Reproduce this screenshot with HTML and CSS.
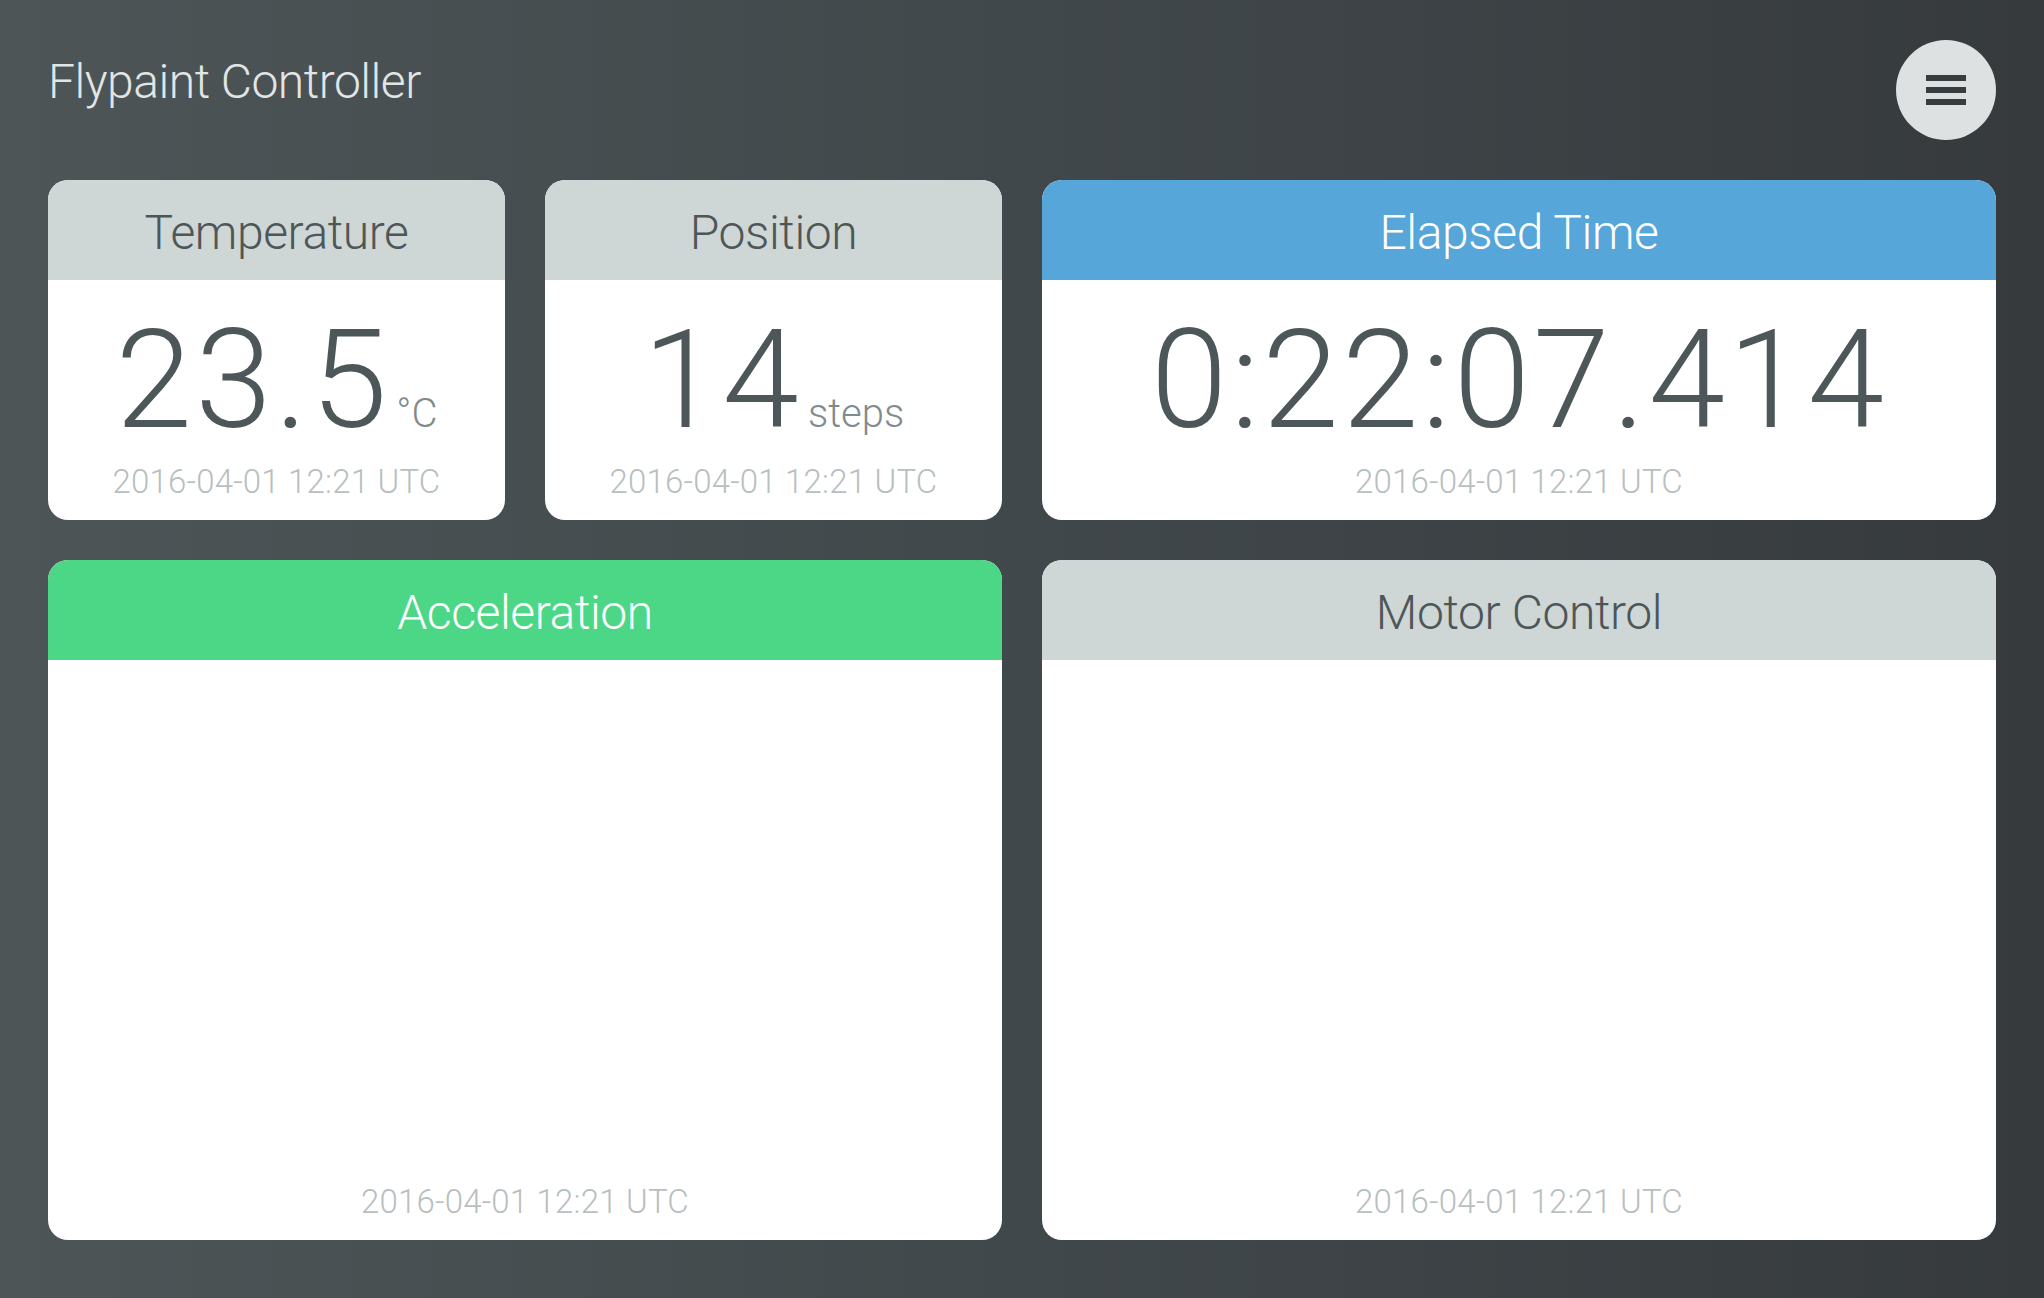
FILE: index.html
```html
<!DOCTYPE html>
<html lang="en">
<head>
<meta charset="utf-8">
<title>Flypaint Controller</title>
<link rel="stylesheet" href="styles.css">
</head>
<body>
<div class="page">
  <header class="topbar">
    <h1 class="title">Flypaint Controller</h1>
    <button class="menu-btn" aria-label="Menu">
      <span class="bar"></span><span class="bar"></span><span class="bar"></span>
    </button>
  </header>
  <main class="grid">
    <section class="card">
      <div class="card-head">Temperature</div>
      <div class="card-body">
        <div class="reading"><span class="value">23.5</span><span class="unit">°C</span></div>
        <div class="stamp">2016-04-01 12:21 UTC</div>
      </div>
    </section>
    <section class="card">
      <div class="card-head">Position</div>
      <div class="card-body">
        <div class="reading"><span class="value">14</span><span class="unit">steps</span></div>
        <div class="stamp">2016-04-01 12:21 UTC</div>
      </div>
    </section>
    <section class="card card-wide">
      <div class="card-head head-blue">Elapsed Time</div>
      <div class="card-body">
        <div class="reading"><span class="value">0:22:07.414</span></div>
        <div class="stamp">2016-04-01 12:21 UTC</div>
      </div>
    </section>
    <section class="card card-wide">
      <div class="card-head head-green">Acceleration</div>
      <div class="card-body">
        <div class="stamp">2016-04-01 12:21 UTC</div>
      </div>
    </section>
    <section class="card card-wide">
      <div class="card-head">Motor Control</div>
      <div class="card-body">
        <div class="stamp">2016-04-01 12:21 UTC</div>
      </div>
    </section>
  </main>
</div>
</body>
</html>
```
FILE: styles.css
```css
html, body {
  margin: 0;
  padding: 0;
  height: 100%;
}
body {
  background: linear-gradient(to right, #4d5557 0%, #41484b 50%, #363a3d 100%);
  font-family: Roboto, "Liberation Sans", sans-serif;
  font-weight: 300;
}
.page {
  padding: 40px 48px;
}
.topbar {
  display: flex;
  justify-content: space-between;
  align-items: flex-start;
  height: 100px;
  margin-bottom: 40px;
}
.title {
  margin: 18px 0 0 0;
  font-size: 48px;
  line-height: 48px;
  font-weight: 300;
  color: #e2e5e5;
  letter-spacing: -0.5px;
}
.menu-btn {
  width: 100px;
  height: 100px;
  border-radius: 50%;
  border: none;
  background: #dde1e2;
  padding: 0;
  display: flex;
  flex-direction: column;
  align-items: center;
  justify-content: center;
  gap: 6px;
  cursor: pointer;
}
.bar {
  display: block;
  width: 40px;
  height: 6px;
  background: #383d40;
}
.grid {
  display: grid;
  grid-template-columns: repeat(4, 1fr);
  grid-template-rows: 340px 680px;
  gap: 40px;
}
.card {
  background: #ffffff;
  border-radius: 20px;
  overflow: hidden;
  display: flex;
  flex-direction: column;
}
.card-wide {
  grid-column: span 2;
}
.card-head {
  flex: 0 0 100px;
  height: 100px;
  box-sizing: border-box;
  padding-top: 5px;
  display: flex;
  align-items: center;
  justify-content: center;
  background: #cfd6d6;
  color: #4d5758;
  font-size: 48px;
  font-weight: 300;
  letter-spacing: -0.4px;
}
.head-blue {
  background: #56a6da;
  color: #ffffff;
}
.head-green {
  background: #4cd787;
  color: #ffffff;
}
.card-body {
  flex: 1 1 auto;
  min-height: 0;
  display: flex;
  flex-direction: column;
  align-items: center;
  padding-bottom: 18px;
}
.reading {
  margin-top: 31px;
  height: 138px;
  font-size: 138px;
  line-height: 138px;
  white-space: nowrap;
  text-align: center;
}
.value {
  font-size: 138px;
  font-weight: 300;
  color: #4d5759;
  letter-spacing: 3px;
}
.unit {
  font-size: 40px;
  color: #7f8c8d;
  margin-left: 6px;
}
.stamp {
  margin-top: auto;
  font-size: 33px;
  line-height: 40px;
  letter-spacing: 0.2px;
  color: #b7bfbf;
}
```
